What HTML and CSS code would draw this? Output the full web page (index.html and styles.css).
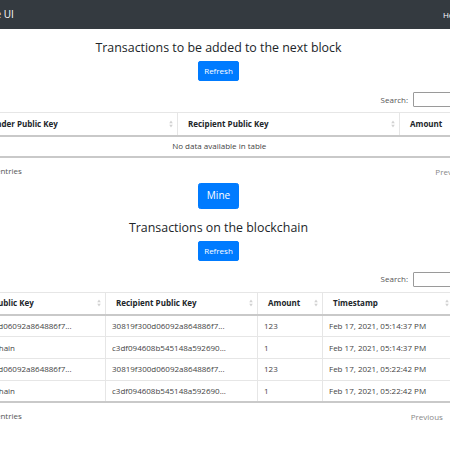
FILE: index.html
```html
<!DOCTYPE html>
<html lang="en">
<head>
<meta charset="utf-8">
<title>Blockchain Node UI</title>
<link rel="stylesheet" href="styles.css">
</head>
<body>
<div class="frame">
  <nav class="navbar">
    <span class="brand">Blockchain Node UI</span>
    <div class="nav">
      <a class="nav-link active">Home</a>
      <a class="nav-link">Configure</a>
    </div>
  </nav>

  <main class="container">
    <h4 class="title">Transactions to be added to the next block</h4>
    <div class="btn-row"><button class="btn">Refresh</button></div>

    <div class="dt">
      <div class="dt-search"><label>Search:</label><input type="search"></div>
      <table class="dt-table">
        <colgroup><col style="width:53px"><col style="width:201px"><col style="width:222px"><col style="width:115px"></colgroup>
        <thead>
          <tr>
            <th><span class="th-inner"><span>#</span><svg class="sort" viewBox="0 0 4 8"><path d="M2 0.5L3.8 3.2H0.2Z M2 7.5L0.2 4.8H3.8Z"/></svg></span></th>
            <th><span class="th-inner"><span>Sender Public Key</span><svg class="sort" viewBox="0 0 4 8"><path d="M2 0.5L3.8 3.2H0.2Z M2 7.5L0.2 4.8H3.8Z"/></svg></span></th>
            <th><span class="th-inner"><span>Recipient Public Key</span><svg class="sort" viewBox="0 0 4 8"><path d="M2 0.5L3.8 3.2H0.2Z M2 7.5L0.2 4.8H3.8Z"/></svg></span></th>
            <th><span class="th-inner"><span>Amount</span><svg class="sort" viewBox="0 0 4 8"><path d="M2 0.5L3.8 3.2H0.2Z M2 7.5L0.2 4.8H3.8Z"/></svg></span></th>
          </tr>
        </thead>
        <tbody>
          <tr><td class="empty" colspan="4">No data available in table</td></tr>
        </tbody>
      </table>
      <div class="dt-footer">
        <span class="info">Showing 0 to 0 of 0 entries</span>
        <span class="pager"><span class="page-btn">Previous</span><span class="page-btn">Next</span></span>
      </div>
    </div>

    <div class="btn-row mine-row"><button class="btn btn-lg">Mine</button></div>

    <h4 class="title">Transactions on the blockchain</h4>
    <div class="btn-row"><button class="btn">Refresh</button></div>

    <div class="dt">
      <div class="dt-search"><label>Search:</label><input type="search"></div>
      <table class="dt-table">
        <colgroup><col style="width:29px"><col style="width:153px"><col style="width:152px"><col style="width:65px"><col style="width:131px"><col style="width:61px"></colgroup>
        <thead>
          <tr>
            <th><span class="th-inner"><span>#</span><svg class="sort" viewBox="0 0 4 8"><path d="M2 0.5L3.8 3.2H0.2Z M2 7.5L0.2 4.8H3.8Z"/></svg></span></th>
            <th><span class="th-inner"><span>Sender Public Key</span><svg class="sort" viewBox="0 0 4 8"><path d="M2 0.5L3.8 3.2H0.2Z M2 7.5L0.2 4.8H3.8Z"/></svg></span></th>
            <th><span class="th-inner"><span>Recipient Public Key</span><svg class="sort" viewBox="0 0 4 8"><path d="M2 0.5L3.8 3.2H0.2Z M2 7.5L0.2 4.8H3.8Z"/></svg></span></th>
            <th><span class="th-inner"><span>Amount</span><svg class="sort" viewBox="0 0 4 8"><path d="M2 0.5L3.8 3.2H0.2Z M2 7.5L0.2 4.8H3.8Z"/></svg></span></th>
            <th><span class="th-inner"><span>Timestamp</span><svg class="sort" viewBox="0 0 4 8"><path d="M2 0.5L3.8 3.2H0.2Z M2 7.5L0.2 4.8H3.8Z"/></svg></span></th>
            <th><span class="th-inner"><span>Block</span><svg class="sort" viewBox="0 0 4 8"><path d="M2 0.5L3.8 3.2H0.2Z M2 7.5L0.2 4.8H3.8Z"/></svg></span></th>
          </tr>
        </thead>
        <tbody>
          <tr><td>1</td><td>30819f300d06092a864886f7...</td><td>30819f300d06092a864886f7...</td><td>123</td><td>Feb 17, 2021, 05:14:37 PM</td><td>1</td></tr>
          <tr><td>2</td><td>The Blockchain</td><td>c3df094608b545148a592690...</td><td>1</td><td>Feb 17, 2021, 05:14:37 PM</td><td>1</td></tr>
          <tr><td>3</td><td>30819f300d06092a864886f7...</td><td>30819f300d06092a864886f7...</td><td>123</td><td>Feb 17, 2021, 05:22:42 PM</td><td>2</td></tr>
          <tr><td>4</td><td>The Blockchain</td><td>c3df094608b545148a592690...</td><td>1</td><td>Feb 17, 2021, 05:22:42 PM</td><td>2</td></tr>
        </tbody>
      </table>
      <div class="dt-footer">
        <span class="info">Showing 1 to 4 of 4 entries</span>
        <span class="pager"><span class="page-btn">Previous</span><span class="page-btn current">1</span><span class="page-btn">Next</span></span>
      </div>
    </div>
  </main>
</div>
</body>
</html>
```
FILE: styles.css
```css
* { box-sizing: border-box; }

html, body {
  margin: 0;
  padding: 0;
}

body {
  width: 450px;
  height: 450px;
  overflow: hidden;
  background: #fff;
  color: #212529;
  font-family: "Open Sans", "Noto Sans", sans-serif;
  font-size: 8px;
  line-height: 12px;
}

.frame {
  width: 591px;
  margin-left: -77px;
}

/* navbar */
.navbar {
  display: flex;
  align-items: center;
  height: 29px;
  background: #343a40;
}

.brand {
  font-size: 10px;
  line-height: 15px;
  color: #fff;
}

.nav {
  display: flex;
  margin-left: auto;
}

.nav-link {
  padding: 0 4px;
  font-size: 8px;
  line-height: 12px;
  color: rgba(255, 255, 255, 0.5);
}

.nav-link.active { color: #fff; }

/* content */
.container {
  display: flex;
  flex-direction: column;
}

.title {
  margin: 11px 0 0;
  font-size: 12.4px;
  line-height: 16px;
  font-weight: 500;
  text-align: center;
  color: #212529;
}

.btn-row {
  display: flex;
  justify-content: center;
  margin-top: 5px;
}

.btn {
  font-family: inherit;
  font-size: 8px;
  line-height: 12px;
  padding: 3px 5.5px;
  border: 1px solid #007bff;
  border-radius: 2px;
  background: #007bff;
  color: #fff;
}

.mine-row { margin-top: 4px; }

.btn-lg {
  font-size: 10px;
  line-height: 15px;
  padding: 4.5px 8px;
  border-radius: 2.5px;
}

/* datatables */
.dt-search {
  display: flex;
  justify-content: flex-end;
  align-items: center;
  height: 15px;
  margin-top: 11px;
  color: #555;
}

.dt-search input {
  width: 101px;
  height: 15px;
  margin: 0 0 0 5px;
  padding: 0 2px;
  border: 1px solid #9a9a9a;
  border-radius: 1px;
  font: inherit;
  background: #fff;
}

.dt-table {
  width: 100%;
  margin-top: 5px;
  border-collapse: collapse;
  table-layout: fixed;
  border-top: 1px solid #e6e6e6;
  border-bottom: 2px solid #c9c9c9;
}

.dt-table th {
  height: 23px;
  padding: 0 4px 0 10px;
  text-align: left;
  font-weight: 700;
  color: #212529;
  border-left: 1px solid #e6e6e6;
  border-bottom: 2px solid #c9c9c9;
  white-space: nowrap;
  overflow: hidden;
}

.th-inner {
  display: flex;
  justify-content: space-between;
  align-items: center;
}

.sort {
  width: 4px;
  height: 8px;
  flex: none;
  fill: #d2d2d2;
}

.dt-table td {
  height: 21.7px;
  padding: 0 6px;
  color: #444;
  border-left: 1px solid #e6e6e6;
  border-top: 1px solid #e6e6e6;
  white-space: nowrap;
  overflow: hidden;
}

.dt-table td.empty {
  height: 21px;
  text-align: center;
}

.dt-footer {
  display: flex;
  justify-content: space-between;
  margin-top: 7px;
  color: #555;
}

.pager { display: flex; }

.page-btn {
  padding: 0 8px;
  margin-left: 2px;
  color: #888;
  border: 1px solid transparent;
}

.page-btn.current {
  color: #333;
  border-color: #cfcfcf;
  border-radius: 2px;
  background: linear-gradient(#ffffff, #e2e2e2);
}
```
